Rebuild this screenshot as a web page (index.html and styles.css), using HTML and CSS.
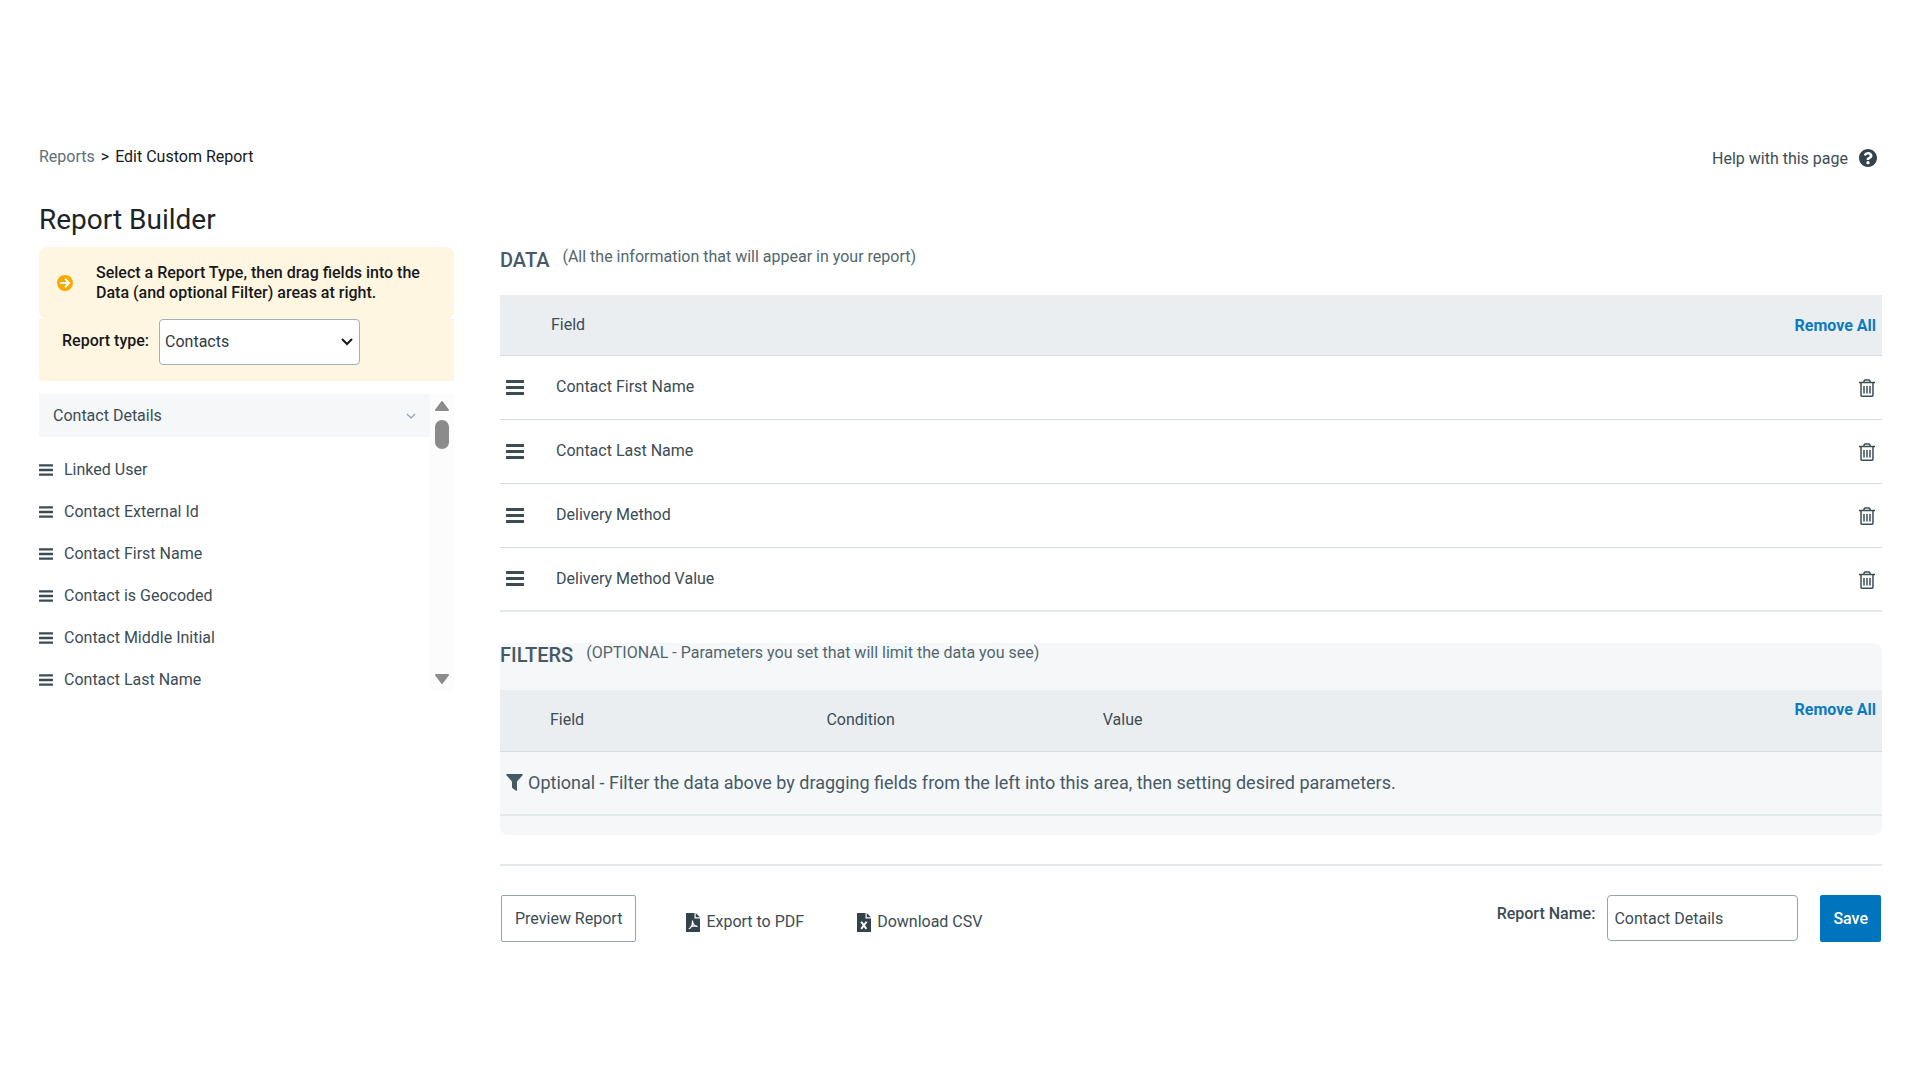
FILE: index.html
```html
<!DOCTYPE html>
<html lang="en">
<head>
<meta charset="utf-8">
<meta name="viewport" content="width=device-width, initial-scale=1">
<title>Edit Custom Report</title>
<link rel="stylesheet" href="styles.css">
</head>
<body>
<svg class="sprite" aria-hidden="true">
  <symbol id="bars" viewBox="0 0 18 15">
    <path d="M.5 0h17q.5 0 .5.500v2q0 .5-.5.500H.5Q0 3 0 2.500v-2Q0 0 .5 0zM.5 6h17q.5 0 .5.500v2q0 .5-.5.500H.5Q0 9 0 8.500v-2Q0 6 .5 6zM.5 12h17q.5 0 .5.500v2q0 .5-.5.500H.5q-.5 0-.5-.500v-2q0-.5.5-.500z"/>
  </symbol>
  <symbol id="trash" viewBox="0 0 16 18">
    <path d="M0 3.500h16M5 3.500V2.200Q5 1 6.200 1h3.600Q11 1 11 2.200v1.300M2 4v12q0 1.300 1.300 1.300h9.400q1.300 0 1.300-1.300V4M5 7v7.500M8 7v7.500M11 7v7.500" fill="none" stroke="currentColor" stroke-width="1.500"/>
  </symbol>
</svg>

<div class="page">
  <header class="topbar">
    <nav class="breadcrumb" aria-label="Breadcrumb">
      <a class="breadcrumb-link" href="#">Reports</a>
      <span>&gt;</span>
      <span>Edit Custom Report</span>
    </nav>
    <a class="help" href="#">Help with this page
      <svg class="help-icon" viewBox="8 8 496 496" aria-hidden="true"><path d="M504 256c0 136.997-111.043 248-248 248S8 392.997 8 256C8 119.083 119.043 8 256 8s248 111.083 248 248zM262.655 90c-54.497 0-89.255 22.957-116.549 63.758-3.536 5.286-2.353 12.415 2.715 16.258l34.699 26.310c5.205 3.947 12.621 3.008 16.665-2.122 17.864-22.658 30.113-35.797 57.303-35.797 20.429 0 45.698 13.148 45.698 32.958 0 14.976-12.363 22.667-32.534 33.976C247.128 238.528 216 254.941 216 296v4c0 6.627 5.373 12 12 12h56c6.627 0 12-5.373 12-12v-1.333c0-28.462 83.186-29.647 83.186-106.667 0-58.002-60.165-102-116.531-102zM256 338c-25.365 0-46 20.635-46 46 0 25.364 20.635 46 46 46s46-20.636 46-46c0-25.365-20.635-46-46-46z"/></svg>
    </a>
  </header>

  <div class="layout">
    <aside class="sidebar">
      <h1 class="title">Report Builder</h1>
      <div class="notice">
        <svg class="notice-icon" viewBox="0 0 16 16" aria-hidden="true"><circle cx="8" cy="8" r="8" fill="#f9a800"/><path d="M3.300 8h8.200M8 3.800 12.100 8 8 12.200" fill="none" stroke="#fff" stroke-width="2"/></svg>
        <p class="notice-text">Select a Report Type, then drag fields into the Data (and optional Filter) areas at right.</p>
      </div>
      <div class="type-row">
        <label class="type-label" for="report-type">Report type:</label>
        <select class="type-select" id="report-type"><option>Contacts</option></select>
      </div>
      <div class="picker">
        <div class="picker-body">
          <button class="group" type="button">Contact Details
            <svg class="group-icon" viewBox="0 0 10 6" aria-hidden="true"><path d="M1 1l4 4 4-4" fill="none" stroke="currentColor" stroke-width="1.300"/></svg>
          </button>
          <ul class="fields">
            <li class="field"><svg class="field-icon" aria-hidden="true"><use href="#bars"/></svg>Linked User</li>
            <li class="field"><svg class="field-icon" aria-hidden="true"><use href="#bars"/></svg>Contact External Id</li>
            <li class="field"><svg class="field-icon" aria-hidden="true"><use href="#bars"/></svg>Contact First Name</li>
            <li class="field"><svg class="field-icon" aria-hidden="true"><use href="#bars"/></svg>Contact is Geocoded</li>
            <li class="field"><svg class="field-icon" aria-hidden="true"><use href="#bars"/></svg>Contact Middle Initial</li>
            <li class="field"><svg class="field-icon" aria-hidden="true"><use href="#bars"/></svg>Contact Last Name</li>
          </ul>
        </div>
        <div class="scrollbar" aria-hidden="true">
          <svg class="arrow" viewBox="0 0 16 12"><path d="M8 2 2 10h12z" fill="currentColor" stroke="currentColor" stroke-width="2" stroke-linejoin="round"/></svg>
          <div class="thumb"></div>
          <svg class="arrow arrow-down" viewBox="0 0 16 12"><path d="M8 10 2 2h12z" fill="currentColor" stroke="currentColor" stroke-width="2" stroke-linejoin="round"/></svg>
        </div>
      </div>
    </aside>

    <main class="content">
      <section class="data">
        <div class="section-head">
          <h2 class="section-title">DATA</h2>
          <p class="section-note">(All the information that will appear in your report)</p>
        </div>
        <table class="grid">
          <thead>
            <tr><th class="col-handle"></th><th class="col-name head-name">Field</th><th class="col-action head-action"><button class="remove" type="button">Remove All</button></th></tr>
          </thead>
          <tbody>
            <tr><td class="col-handle"><svg class="handle" aria-hidden="true"><use href="#bars"/></svg></td><td class="col-name">Contact First Name</td><td class="col-action"><button class="trash" type="button" aria-label="Remove Contact First Name"><svg class="trash-icon"><use href="#trash"/></svg></button></td></tr>
            <tr><td class="col-handle"><svg class="handle" aria-hidden="true"><use href="#bars"/></svg></td><td class="col-name">Contact Last Name</td><td class="col-action"><button class="trash" type="button" aria-label="Remove Contact Last Name"><svg class="trash-icon"><use href="#trash"/></svg></button></td></tr>
            <tr><td class="col-handle"><svg class="handle" aria-hidden="true"><use href="#bars"/></svg></td><td class="col-name">Delivery Method</td><td class="col-action"><button class="trash" type="button" aria-label="Remove Delivery Method"><svg class="trash-icon"><use href="#trash"/></svg></button></td></tr>
            <tr><td class="col-handle"><svg class="handle" aria-hidden="true"><use href="#bars"/></svg></td><td class="col-name">Delivery Method Value</td><td class="col-action"><button class="trash" type="button" aria-label="Remove Delivery Method Value"><svg class="trash-icon"><use href="#trash"/></svg></button></td></tr>
          </tbody>
        </table>
      </section>

      <section class="filters">
        <div class="section-head filters-head">
          <h2 class="section-title">FILTERS</h2>
          <p class="section-note">(OPTIONAL - Parameters you set that will limit the data you see)</p>
        </div>
        <table class="grid filter-grid">
          <thead>
            <tr><th class="fcol">Field</th><th class="fcol">Condition</th><th class="fcol">Value</th><th class="fcol-action"><button class="remove" type="button">Remove All</button></th></tr>
          </thead>
          <tbody>
            <tr><td class="hint" colspan="4"><div class="hint-line"><svg class="funnel" viewBox="0 0 17 17" aria-hidden="true"><path d="M1 0h15q1.300.2.600 1.300L11 7.500V16.200q-.2.900-1 .5L6.300 14q-.3-.3-.3-.7V7.500L.4 1.300Q-.3.200 1 0z"/></svg>Optional - Filter the data above by dragging fields from the left into this area, then setting desired parameters.</div></td></tr>
          </tbody>
        </table>
      </section>

      <footer class="actions">
        <button class="btn btn-outline" type="button">Preview Report</button>
        <a class="export" href="#">
          <svg class="file-icon" viewBox="0 0 14 19" aria-hidden="true"><path d="M0 0h8.500v5.500H14V19H0zM9.700 0 14 4.300H9.700z"/><path d="M2.800 15.800c2.400-1 3.900-4.300 3.700-8.300M6.500 8c.3 3 2.300 5.300 5 5.600M4 14.300c2-1.100 4.500-1.600 7.200-1.200" fill="none" stroke="#fff" stroke-width="1.200"/></svg>
          Export to PDF</a>
        <a class="export" href="#">
          <svg class="file-icon" viewBox="0 0 14 19" aria-hidden="true"><path d="M0 0h8.500v5.500H14V19H0zM9.700 0 14 4.300H9.700z"/><path d="M4.200 8.700l5.200 7.200M9.600 8.700l-5.400 7.200" fill="none" stroke="#fff" stroke-width="1.900"/></svg>
          Download CSV</a>
        <div class="name-group">
          <label class="name-label" for="report-name">Report Name:</label>
          <input class="name-input" id="report-name" type="text" value="Contact Details">
        </div>
        <button class="btn btn-save" type="button">Save</button>
      </footer>
    </main>
  </div>
</div>
</body>
</html>
```
FILE: styles.css
```css
* { box-sizing: border-box; }

body {
  margin: 0;
  background: #fff;
  color: #3c4c55;
  font: 16px/20px Roboto, "Liberation Sans", sans-serif;
}

h1, h2, p, ul { margin: 0; padding: 0; }
a { color: inherit; text-decoration: none; }
svg { display: block; fill: currentColor; }

button, input, select { font: inherit; color: inherit; }
button { border: 0; padding: 0; background: none; cursor: pointer; }

.sprite { display: none; }

.page { padding: 147px 38px 0 39px; }

.topbar {
  display: flex;
  justify-content: space-between;
  padding-right: 5px;
}

.breadcrumb { display: flex; gap: 6px; color: #16191c; }
.breadcrumb-link { color: #5c6f7a; }

.help { display: flex; gap: 11px; padding-top: 2px; }
.help-icon { width: 18px; height: 18px; color: #33434c; }

.layout { display: flex; gap: 46px; padding-top: 35px; }

.sidebar { flex: none; width: 415px; }

.title {
  padding-bottom: 11px;
  color: #1d2428;
  font-size: 28px;
  font-weight: 400;
  line-height: 32px;
}

.notice {
  display: flex;
  align-items: center;
  gap: 23px;
  padding: 16px 18px;
  border-radius: 8px;
  background: #fff6e1;
}
.notice-icon { flex: none; width: 16px; height: 16px; }
.notice-text { color: #16191c; font-weight: 500; }

.type-row {
  display: flex;
  align-items: flex-start;
  gap: 10px;
  padding: 0 23px 16px;
  background: #fff6e1;
}
.type-label { padding-top: 12px; color: #16191c; font-weight: 500; }
.type-select {
  width: 201px;
  height: 46px;
  padding: 0 5px;
  border: 1px solid #a0b0b8;
  border-radius: 4px;
  appearance: none;
  background: #fff url("data:image/svg+xml,%3Csvg xmlns='http://www.w3.org/2000/svg' width='12' height='8'%3E%3Cpath d='M1 1l5 5 5-5' fill='none' stroke='%2316191c' stroke-width='2'/%3E%3C/svg%3E") no-repeat right 6px center;
  color: #33393d;
}

.picker { display: flex; height: 297px; margin-top: 13px; }
.picker-body { flex: 1; overflow: hidden; }

.group {
  display: flex;
  align-items: center;
  justify-content: space-between;
  width: 100%;
  height: 43px;
  padding: 0 14px;
  background: #f5f7f9;
}
.group-icon { width: 10px; height: 6px; color: #93a5b0; }

.fields { padding-top: 12px; list-style: none; }
.field { display: flex; align-items: center; gap: 11px; height: 42px; }
.field-icon { width: 14px; height: 12px; }

.scrollbar {
  display: flex;
  flex-direction: column;
  align-items: center;
  gap: 8px;
  width: 24px;
  padding: 6px 0;
  background: #fcfcfc;
  color: #8b8b8b;
}
.arrow { width: 16px; height: 12px; }
.arrow-down { margin-top: auto; }
.thumb { width: 14px; height: 29px; border-radius: 7px; background: #8b8b8b; }

.content { flex: 1; min-width: 0; padding-top: 43px; }

.section-head { display: flex; gap: 13px; }
.section-title {
  padding-top: 1px;
  color: #465a66;
  font-size: 20px;
  font-weight: 500;
  line-height: 24px;
}
.section-note { color: #52666f; }

.grid {
  width: 100%;
  margin-top: 23px;
  border-collapse: collapse;
  table-layout: fixed;
}
.grid th {
  height: 60px;
  padding: 0;
  border-bottom: 1px solid #d5dce0;
  background: #ebeef1;
  font-weight: 400;
  text-align: left;
}
.grid td { height: 64px; padding: 0; border-bottom: 1px solid #d5dce0; }
.grid tbody tr:last-child td { border-bottom: 2px solid #e3e8eb; }

.grid .col-handle { width: 51px; padding-left: 6px; }
.grid .col-name { padding-left: 5px; }
.grid .head-name { padding-left: 0; }
.grid .col-action { width: 120px; padding-right: 6px; text-align: right; }
.grid .head-action { padding-top: 3px; }

.handle { width: 18px; height: 15px; }
.remove { color: #0b7bc1; font-weight: 700; line-height: 20px; }
.trash { display: inline-block; vertical-align: middle; }
.trash-icon { width: 18px; height: 18px; }

.filters {
  margin-top: 31px;
  padding-bottom: 19px;
  border-radius: 8px;
  background: #f5f7f9;
}
.filters-head .section-title { padding-top: 0; }
.filter-grid th { height: 61px; }
.filter-grid th.fcol { width: 20%; padding-left: 50px; }
.filter-grid th.fcol-action { padding: 10px 6px 0 0; text-align: right; vertical-align: top; }
.hint-line {
  display: flex;
  align-items: center;
  gap: 5px;
  padding-left: 6px;
  color: #465a66;
  font-size: 18px;
  line-height: 24px;
}
.funnel { width: 17px; height: 17px; }

.actions {
  display: flex;
  align-items: flex-start;
  margin-top: 29px;
  padding-top: 29px;
  border-top: 2px solid #e3e8eb;
}
.btn { height: 47px; border-radius: 2px; }
.btn-outline { margin: 0 50px 0 1px; padding: 0 13px; border: 1px solid #93a5b0; background: #fff; }
.btn-save { margin: 0 1px 0 22px; padding: 0 13px; background: #0074bd; color: #fff; font-weight: 500; }

.export { display: flex; align-items: center; gap: 6px; margin: 17px 53px 0 0; }
.file-icon { width: 14px; height: 19px; color: #33434c; }

.name-group { display: flex; gap: 12px; margin-left: auto; }
.name-label { padding-top: 9px; font-weight: 500; }
.name-input {
  width: 191px;
  height: 46px;
  padding: 0 6px;
  border: 1px solid #93a5b0;
  border-radius: 4px;
  background: #fff;
}
```
